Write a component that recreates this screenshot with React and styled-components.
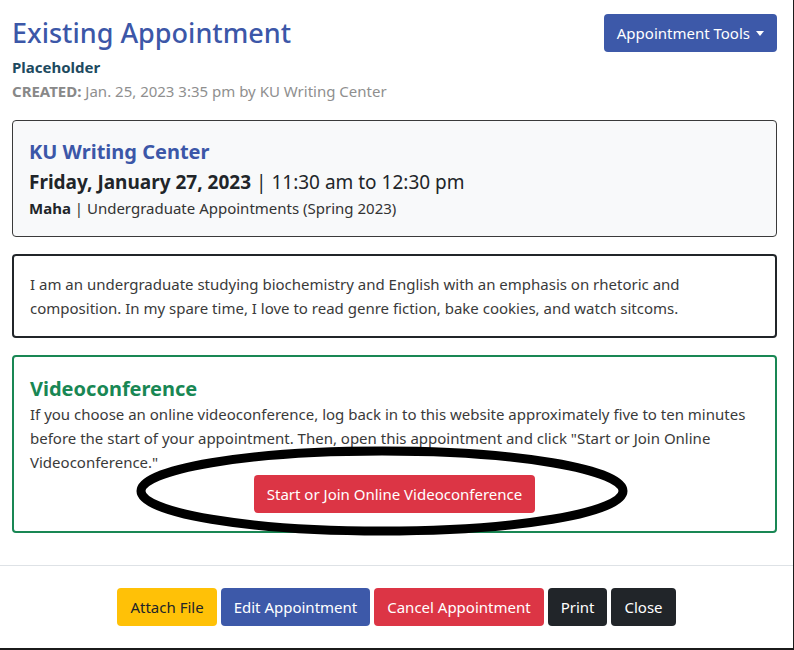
import React from 'react';
import styled, { createGlobalStyle } from 'styled-components';

const GlobalStyle = createGlobalStyle`
	body {
		margin: 0;
		background: #1b1b1b;
		font-family: 'Noto Sans', 'Open Sans', sans-serif;
		color: #212529;
	}
`;

const Modal = styled.div`
	width: 793px;
	height: 648px;
	background: #fff;
	display: flex;
	flex-direction: column;
`;

const Body = styled.div`
	padding: 12px 16px 0 12px;
	flex: 1;
`;

const Header = styled.div`
	display: flex;
	justify-content: space-between;
	align-items: flex-start;
`;

const Title = styled.h3`
	margin: 5px 0 0;
	font-size: 27px;
	font-weight: 500;
	line-height: 1.2;
	color: #3c57a8;
`;

const Sub = styled.div`
	margin-top: 8px;
	font-size: 15px;
	font-weight: 700;
	color: #1d4a60;
`;

const Created = styled.div`
	margin-top: 4px;
	font-size: 15px;
	color: #8f8f8f;
	b {
		color: #888;
	}
`;

const Button = styled.button`
	font-family: inherit;
	font-size: 15px;
	line-height: 24px;
	padding: 7px 13px;
	border: none;
	border-radius: 4px;
	color: ${(p) => (p.$variant === 'warning' ? '#212529' : '#fff')};
	background: ${(p) =>
		({
			primary: '#3d59a9',
			danger: '#dc3545',
			warning: '#ffc107',
			dark: '#212529',
		}[p.$variant])};
	display: inline-flex;
	align-items: center;
	gap: 6px;
`;

const Caret = styled.span`
	width: 0;
	height: 0;
	border-left: 4px solid transparent;
	border-right: 4px solid transparent;
	border-top: 5px solid #fff;
`;

const Card = styled.div`
	margin-top: ${(p) => p.$gap}px;
	border: ${(p) => p.$border};
	border-radius: 4px;
	background: ${(p) => p.$bg || '#fff'};
	padding: ${(p) => p.$pad};
	position: relative;
`;

const Center = styled.h4`
	margin: 0;
	font-size: 20px;
	font-weight: 700;
	line-height: 1.3;
	color: ${(p) => p.$color};
`;

const When = styled.div`
	font-size: 19px;
	margin-top: 4px;
	b {
		font-weight: 700;
	}
`;

const Who = styled.div`
	font-size: 15px;
	margin-top: 3px;
	color: #333;
	b {
		color: #212529;
	}
`;

const Text = styled.p`
	margin: 0;
	font-size: 15px;
	line-height: 24px;
	color: #3a3a3a;
`;

const ButtonRow = styled.div`
	display: flex;
	justify-content: center;
	margin-top: ${(p) => p.$top || 0}px;
`;

const Ring = styled.svg`
	position: absolute;
	left: 118px;
	top: 86px;
	pointer-events: none;
`;

const Footer = styled.div`
	border-top: 1px solid #dee2e6;
	height: 82px;
	display: flex;
	align-items: center;
	justify-content: center;
	gap: 4px;
`;

export default function App() {
	return (
		<>
			<GlobalStyle />
			<Modal>
				<Body>
					<Header>
						<div>
							<Title>Existing Appointment</Title>
							<Sub>Placeholder</Sub>
							<Created>
								<b>CREATED:</b> Jan. 25, 2023 3:35 pm by KU Writing Center
							</Created>
						</div>
						<Button $variant="primary" style={{ marginTop: 2 }}>
							Appointment Tools <Caret />
						</Button>
					</Header>

					<Card $gap={19} $border="1px solid #3a3a3a" $bg="#f8f9fa" $pad="18px 16px 18px">
						<Center $color="#3c57a8">KU Writing Center</Center>
						<When>
							<b>Friday, January 27, 2023</b> | 11:30 am to 12:30 pm
						</When>
						<Who>
							<b>Maha</b> | Undergraduate Appointments (Spring 2023)
						</Who>
					</Card>

					<Card $gap={17} $border="2px solid #212529" $pad="16px 16px 16px">
						<Text>
							I am an undergraduate studying biochemistry and English with an emphasis on rhetoric and
							composition. In my spare time, I love to read genre fiction, bake cookies, and watch sitcoms.
						</Text>
					</Card>

					<Card $gap={17} $border="2px solid #198754" $pad="19px 16px 18px">
						<Center $color="#198754">Videoconference</Center>
						<Text>
							If you choose an online videoconference, log back in to this website approximately five to ten
							minutes before the start of your appointment. Then, open this appointment and click "Start or
							Join Online Videoconference."
						</Text>
						<ButtonRow $top={1}>
							<Button $variant="danger">Start or Join Online Videoconference</Button>
						</ButtonRow>
						<Ring width="500" height="96" viewBox="0 0 500 96">
							<ellipse cx="250" cy="48" rx="241" ry="40" fill="none" stroke="#000" strokeWidth="9" />
						</Ring>
					</Card>
				</Body>
				<Footer>
					<Button $variant="warning">Attach File</Button>
					<Button $variant="primary">Edit Appointment</Button>
					<Button $variant="danger">Cancel Appointment</Button>
					<Button $variant="dark">Print</Button>
					<Button $variant="dark">Close</Button>
				</Footer>
			</Modal>
		</>
	);
}
